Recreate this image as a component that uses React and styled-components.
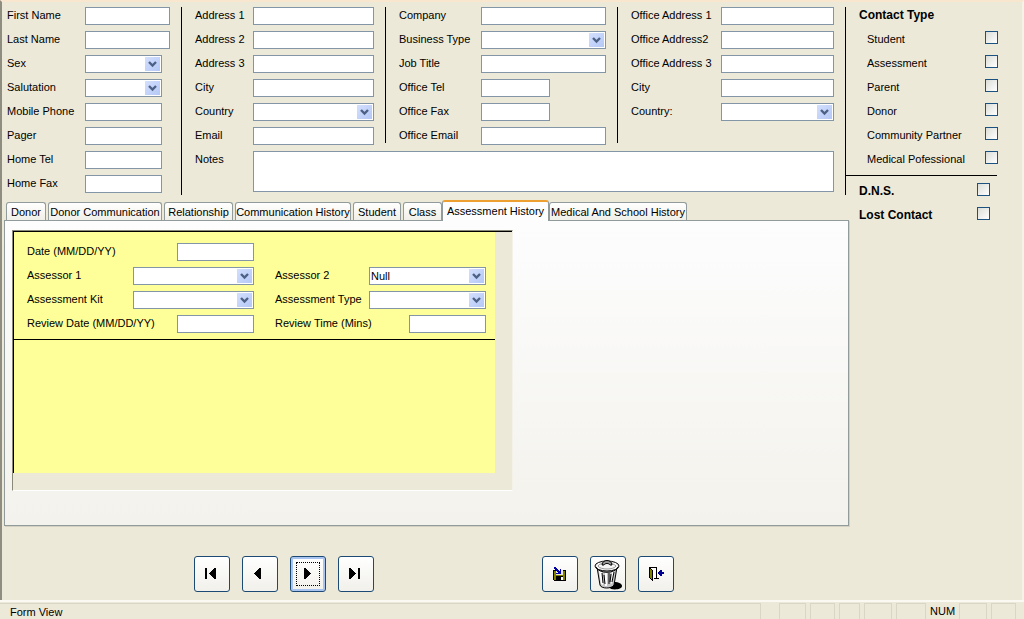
import React from 'react'
import styled, { createGlobalStyle, css } from 'styled-components'

const GlobalStyle = createGlobalStyle`
  * {
    box-sizing: border-box;
  }
  body {
    margin: 0;
    background: #ece9d8;
    color: #000;
    font-family: "Liberation Sans", Arial, sans-serif;
    font-size: 11px;
    line-height: 16px;
  }
  input, select, textarea, button {
    font: inherit;
    color: inherit;
    margin: 0;
    border-radius: 0;
  }
`

const Page = styled.div`
  min-height: 100vh;
  display: flex;
  flex-direction: column;
`
const Main = styled.main`
  flex: 1;
  border-left: 2px solid #8f8d80;
  border-right: 2px solid #f6f3e6;
  border-top: 2px solid #f9e6cf;
`
const Content = styled.div`
  display: grid;
  grid-template-columns: minmax(0, 180fr) minmax(0, 664fr) minmax(0, 176fr);
  grid-template-rows: 188px auto;
  padding-top: 5px;
`
const Group = styled.div`
  min-width: 0;
  padding: 0 11px 0 ${p => p.$first ? '5px' : '13px'};
  border-right: ${p => p.$last ? 'none' : '1px solid #000'};
`
const Middle = styled.div`
  border-right: 1px solid #000;
`
const Groups = styled.div`
  display: grid;
  grid-template-columns: minmax(0, 204fr) minmax(0, 232fr) minmax(0, 228fr);
  grid-template-rows: 136px;
  margin-right: -1px;
  margin-bottom: 8px;
`
const LastGroup = styled(Group)`
  padding-right: 12px;
`
const Row = styled.div`
  display: flex;
  height: 24px;
`
const Label = styled.label`
  flex: none;
  width: ${p => p.$w}px;
  white-space: nowrap;
`
const boxed = css`
  height: 18px;
  background: #fff;
  border: 1px solid #8296a8;
  outline: none;
`
const TextBox = styled.input`
  ${boxed}
  padding: 0 2px;
  min-width: 0;
  ${p => p.$w ? `width: ${p.$w}px;` : 'flex: 1;'}
  ${p => p.$end && 'margin-left: auto;'}
`
const Notes = styled.textarea`
  ${boxed}
  display: block;
  flex: 1;
  min-width: 0;
  height: 41px;
  resize: none;
`
const NotesRow = styled.div`
  display: flex;
  height: 44px;
  padding: 0 11px 0 13px;
`
const SelectWrap = styled.div`
  position: relative;
  min-width: 0;
  ${p => p.$w ? `width: ${p.$w}px;` : 'flex: 1;'}
`
const Select = styled.select`
  ${boxed}
  appearance: none;
  display: block;
  width: 100%;
  padding: 0 18px 2px 1px;
`
const Arrow = styled.svg`
  position: absolute;
  top: 2px;
  right: 2px;
  width: 15px;
  height: 14px;
  pointer-events: none;
  background: linear-gradient(135deg, #d3dffd, #b4c8f6);
`

const Aside = styled.aside`
  grid-column: 3;
  grid-row: 1 / 3;
`
const AsideTitle = styled.h2`
  margin: 0;
  padding-left: 13px;
  height: 24px;
  font-size: 12px;
  line-height: 16px;
`
const CheckRow = styled.div`
  display: flex;
  justify-content: space-between;
  height: 24px;
  white-space: nowrap;
  padding: 0 ${p => p.$strong ? '32px 0 13px' : '24px 0 21px'};
  ${p => p.$strong && 'font-size: 12px; font-weight: bold;'}
`
const Check = styled.input`
  appearance: none;
  flex: none;
  width: 13px;
  height: 13px;
  border: 1px solid #1c5180;
  background: linear-gradient(135deg, #dcdcd7, #fff);
`
const Rule = styled.hr`
  margin: 0 25px 7px 0;
  border: 0;
  border-top: 1px solid #000;
`

const Tabs = styled.div`
  grid-column: 1 / 3;
  margin: 5px -3px 0 2px;
`
const TabList = styled.div`
  display: flex;
  align-items: flex-end;
  height: 20px;
  padding-left: 1px;
`
const Tab = styled.button`
  height: 18px;
  min-width: ${p => p.$w}px;
  margin: 0 1px;
  padding: 0;
  white-space: nowrap;
  border: 1px solid #919b9c;
  border-bottom: 0;
  border-radius: 3px 3px 0 0;
  background: linear-gradient(#fff, #f0efe8);
  ${p => p.$active && css`
    position: relative;
    height: 21px;
    margin: 0 -1px -1px;
    padding-bottom: 2px;
    border-top: 2px solid #eda030;
    background: #fdfdfd;
  `}
`
const Panel = styled.section`
  min-height: 306px;
  padding: 9px 7px;
  border: 1px solid #919b9c;
  box-shadow: 1px 1px 0 #d4d1c2;
  background: linear-gradient(#fdfdfe, #f3f2ec);
`
const SubForm = styled.div`
  width: 501px;
  max-width: 100%;
  height: 261px;
  border: 1px solid #8a8878;
  border-right-color: #f4f2e8;
  border-bottom-color: #fff;
  background: linear-gradient(#000, #000) 0 0 / 100% 1px no-repeat #ece9d8;
`
const Sheet = styled.div`
  width: 482px;
  max-width: 100%;
  height: 242px;
  border: 1px solid #000;
  border-width: 1px 0 0 1px;
  background: #ffff99;
`
const Fields = styled.div`
  display: grid;
  grid-template-columns: 227px 211px;
  column-gap: 21px;
  height: 108px;
  padding: 11px 0 0 13px;
  border-bottom: 1px solid #000;
`

const Toolbar = styled.div`
  display: flex;
  gap: 168px;
  padding: 30px 0 8px 192px;
`
const ButtonSet = styled.div`
  display: flex;
  gap: 12px;
`
const IconButton = styled.button`
  display: grid;
  place-items: center;
  width: 36px;
  height: 36px;
  padding: 0;
  border: 1px solid #1c4a74;
  border-radius: 3px;
  background: linear-gradient(#fff, #f1f0ea);
  ${p => p.$focused && css`
    box-shadow: inset 0 0 0 2px #a9c4f0;
    outline: 1px dotted #000;
    outline-offset: -7px;
  `}
`

const StatusBar = styled.footer`
  display: flex;
  height: 19px;
  gap: 4px;
  padding: 1px 8px 0 0;
  border-top: 2px solid #fbfaf2;
`
const Well = styled.span`
  flex: none;
  width: ${p => p.$w}px;
  height: 16px;
  white-space: nowrap;
  ${p => p.$text ? '' : 'border: 1px solid #d9d6c6; border-bottom: 0;'}
`
const Message = styled(Well)`
  flex: 1;
  margin-right: 14px;
  padding-left: 10px;
  border-left: 0;
`

const Field = ({ id, label, lw, w, options, end }) => (
  <Row>
    <Label htmlFor={id} $w={lw}>{label}</Label>
    {options ? (
      <SelectWrap $w={w}>
        <Select id={id}>{options.map(o => <option key={o}>{o}</option>)}</Select>
        <Arrow viewBox="0 0 15 14">
          <path d="M4 5l3.5 3.5L11 5" fill="none" stroke="#4d6185" strokeWidth="2.4" />
        </Arrow>
      </SelectWrap>
    ) : (
      <TextBox id={id} type="text" $w={w} $end={end} />
    )}
  </Row>
)

const CheckField = ({ id, label, strong }) => (
  <CheckRow $strong={strong}>
    <label htmlFor={id}>{label}</label>
    <Check id={id} type="checkbox" />
  </CheckRow>
)

const none = ['']

const tabs = [
  ['Donor', 40],
  ['Donor Communication', 114],
  ['Relationship', 69],
  ['Communication History', 116],
  ['Student', 48],
  ['Class', 39],
  ['Assessment History', 107],
  ['Medical And School History', 138],
]

const contactTypes = ['Student', 'Assessment', 'Parent', 'Donor', 'Community Partner', 'Medical Pofessional']

const navPaths = {
  first: 'M0 0h2v11h-2zM11 0v11h-2v-1h-1v-1h-1v-1h-1v-1h-1v-1h-1v-1h1v-1h1v-1h1v-1h1v-1h1v-1z',
  prev: 'M8 0v11h-2v-1h-1v-1h-1v-1h-1v-1h-1v-1h-1v-1h1v-1h1v-1h1v-1h1v-1h1v-1z',
  next: 'M3 0v11h2v-1h1v-1h1v-1h1v-1h1v-1h1v-1h-1v-1h-1v-1h-1v-1h-1v-1h-1v-1z',
  last: 'M0 0v11h2v-1h1v-1h1v-1h1v-1h1v-1h1v-1h-1v-1h-1v-1h-1v-1h-1v-1h-1v-1zM9 0h2v11h-2z',
}

const NavIcon = ({ name }) => (
  <svg width="14" height="12" viewBox="0 0 14 12" shapeRendering="crispEdges">
    <path d={navPaths[name]} />
  </svg>
)

const SaveIcon = () => (
  <svg width="14" height="15" viewBox="0 0 14 15" shapeRendering="crispEdges">
    <path d="M0 3h13v11H1v-1H0z" />
    <path d="M1 4h2v9h-2zM10 4h2v9h-2zM3 8h7v1h-7z" fill="#808000" />
    <path d="M3 3h7v5h-7z" fill="#ece9d8" />
    <path d="M8 10h2v3h-2z" fill="#fff" />
    <path d="M1 0h2v1h1v1h1v1h1v1h1v-2h1v5h-5v-1h2v-1h-1v-1h-1v-1h-1v-1h-1z" fill="#0000a8" />
  </svg>
)

const TrashIcon = () => (
  <svg width="30" height="32" viewBox="0 0 30 32">
    <path d="M16 29l5-5c5 0 8 2 8 4 0 3-6 4-11 3z" />
    <path d="M4 9l3 18c1 4 12 4 14 0l3-18z" fill="#c6c6c6" stroke="#000" />
    <path d="M6 13l2 13 2 1-1-13zM12 15v13h2V15zM19 14l-1 12 1-1 2-12z" fill="#fff" />
    <path d="M9 15l1 10M11 17l1 9M16 15v11M18 16l-1 8M21 14l-2 10" stroke="#000" fill="none" />
    <ellipse cx="14" cy="8" rx="12" ry="5" fill="#f5f5f5" stroke="#000" />
    <path d="M3 9c3 7 19 7 22 0" fill="none" stroke="#000" />
    <path d="M5 8c2-4 15-4 18 0-2 4-16 4-18 0" fill="none" stroke="#999" />
    <path d="M9 7c0-6 10-6 10 0h-2c-1-2-5-2-6 0z" fill="#999" stroke="#000" />
  </svg>
)

const ExitIcon = () => (
  <svg width="17" height="16" viewBox="0 0 17 16" shapeRendering="crispEdges">
    <path d="M1 1h8v11h2v1h-5v-1h2v-10h-7z" />
    <path d="M5 2h3v10h-3z" fill="#fff" />
    <path d="M1 1h1v1h1v1h1v1h1v11h-1v-1h-1v-1h-1v-1h-1z" />
    <path d="M2 3h1v1h1v9h-1v-1h-1z" fill="#808000" />
    <path d="M10 6h1v-1h1v-1h2v2h2v2h-2v2h-2v-1h-1v-1h-1z" fill="#000090" />
  </svg>
)

const App = () => {
  return (
    <Page>
      <GlobalStyle />
      <Main>
        <Content>
          <Group $first>
            <Field id="first" label="First Name" lw={78} />
            <Field id="last" label="Last Name" lw={78} />
            <Field id="sex" label="Sex" lw={78} w={77} options={none} />
            <Field id="salutation" label="Salutation" lw={78} w={77} options={none} />
            <Field id="mobile" label="Mobile Phone" lw={78} w={77} />
            <Field id="pager" label="Pager" lw={78} w={77} />
            <Field id="hometel" label="Home Tel" lw={78} w={77} />
            <Field id="homefax" label="Home Fax" lw={78} w={77} />
          </Group>
          <Middle>
            <Groups>
              <Group>
                <Field id="addr1" label="Address 1" lw={58} />
                <Field id="addr2" label="Address 2" lw={58} />
                <Field id="addr3" label="Address 3" lw={58} />
                <Field id="city" label="City" lw={58} />
                <Field id="country" label="Country" lw={58} options={none} />
                <Field id="email" label="Email" lw={58} />
              </Group>
              <Group>
                <Field id="company" label="Company" lw={82} />
                <Field id="business" label="Business Type" lw={82} options={none} />
                <Field id="job" label="Job Title" lw={82} />
                <Field id="otel" label="Office Tel" lw={82} w={69} />
                <Field id="ofax" label="Office Fax" lw={82} w={69} />
                <Field id="oemail" label="Office Email" lw={82} />
              </Group>
              <LastGroup $last>
                <Field id="oaddr1" label="Office Address 1" lw={90} />
                <Field id="oaddr2" label="Office Address2" lw={90} />
                <Field id="oaddr3" label="Office Address 3" lw={90} />
                <Field id="ocity" label="City" lw={90} />
                <Field id="ocountry" label="Country:" lw={90} options={none} />
              </LastGroup>
            </Groups>
            <NotesRow>
              <Label htmlFor="notes" $w={58}>Notes</Label>
              <Notes id="notes" />
            </NotesRow>
          </Middle>

          <Aside>
            <AsideTitle>Contact Type</AsideTitle>
            {contactTypes.map((t, i) => <CheckField key={t} id={`type${i}`} label={t} />)}
            <Rule />
            <CheckField id="dns" label="D.N.S." strong />
            <CheckField id="lost" label="Lost Contact" strong />
          </Aside>

          <Tabs>
            <TabList role="tablist">
              {tabs.map(([name, w]) => (
                <Tab key={name} type="button" role="tab" $w={w} $active={name === 'Assessment History'}>{name}</Tab>
              ))}
            </TabList>
            <Panel>
              <SubForm>
                <Sheet>
                  <Fields>
                    <div>
                      <Field id="date" label="Date (MM/DD/YY)" lw={106} w={77} end />
                      <Field id="assessor1" label="Assessor 1" lw={106} options={none} />
                      <Field id="kit" label="Assessment Kit" lw={106} options={none} />
                      <Field id="review" label="Review Date (MM/DD/YY)" lw={106} w={77} end />
                    </div>
                    <div>
                      <Row />
                      <Field id="assessor2" label="Assessor 2" lw={94} options={['Null']} />
                      <Field id="atype" label="Assessment Type" lw={94} options={none} />
                      <Field id="rtime" label="Review Time (Mins)" lw={94} w={77} end />
                    </div>
                  </Fields>
                </Sheet>
              </SubForm>
            </Panel>
          </Tabs>
        </Content>

        <Toolbar>
          <ButtonSet>
            <IconButton type="button" aria-label="First record"><NavIcon name="first" /></IconButton>
            <IconButton type="button" aria-label="Previous record"><NavIcon name="prev" /></IconButton>
            <IconButton type="button" aria-label="Next record" $focused><NavIcon name="next" /></IconButton>
            <IconButton type="button" aria-label="Last record"><NavIcon name="last" /></IconButton>
          </ButtonSet>
          <ButtonSet>
            <IconButton type="button" aria-label="Save record"><SaveIcon /></IconButton>
            <IconButton type="button" aria-label="Delete record"><TrashIcon /></IconButton>
            <IconButton type="button" aria-label="Close form"><ExitIcon /></IconButton>
          </ButtonSet>
        </Toolbar>
      </Main>

      <StatusBar>
        <Message>Form View</Message>
        <Well $w={27} />
        <Well $w={25} />
        <Well $w={21} />
        <Well $w={28} />
        <Well $w={30} />
        <Well $w={25} $text>NUM</Well>
        <Well $w={28} />
        <Well $w={25} />
      </StatusBar>
    </Page>
  )
}

export default App
